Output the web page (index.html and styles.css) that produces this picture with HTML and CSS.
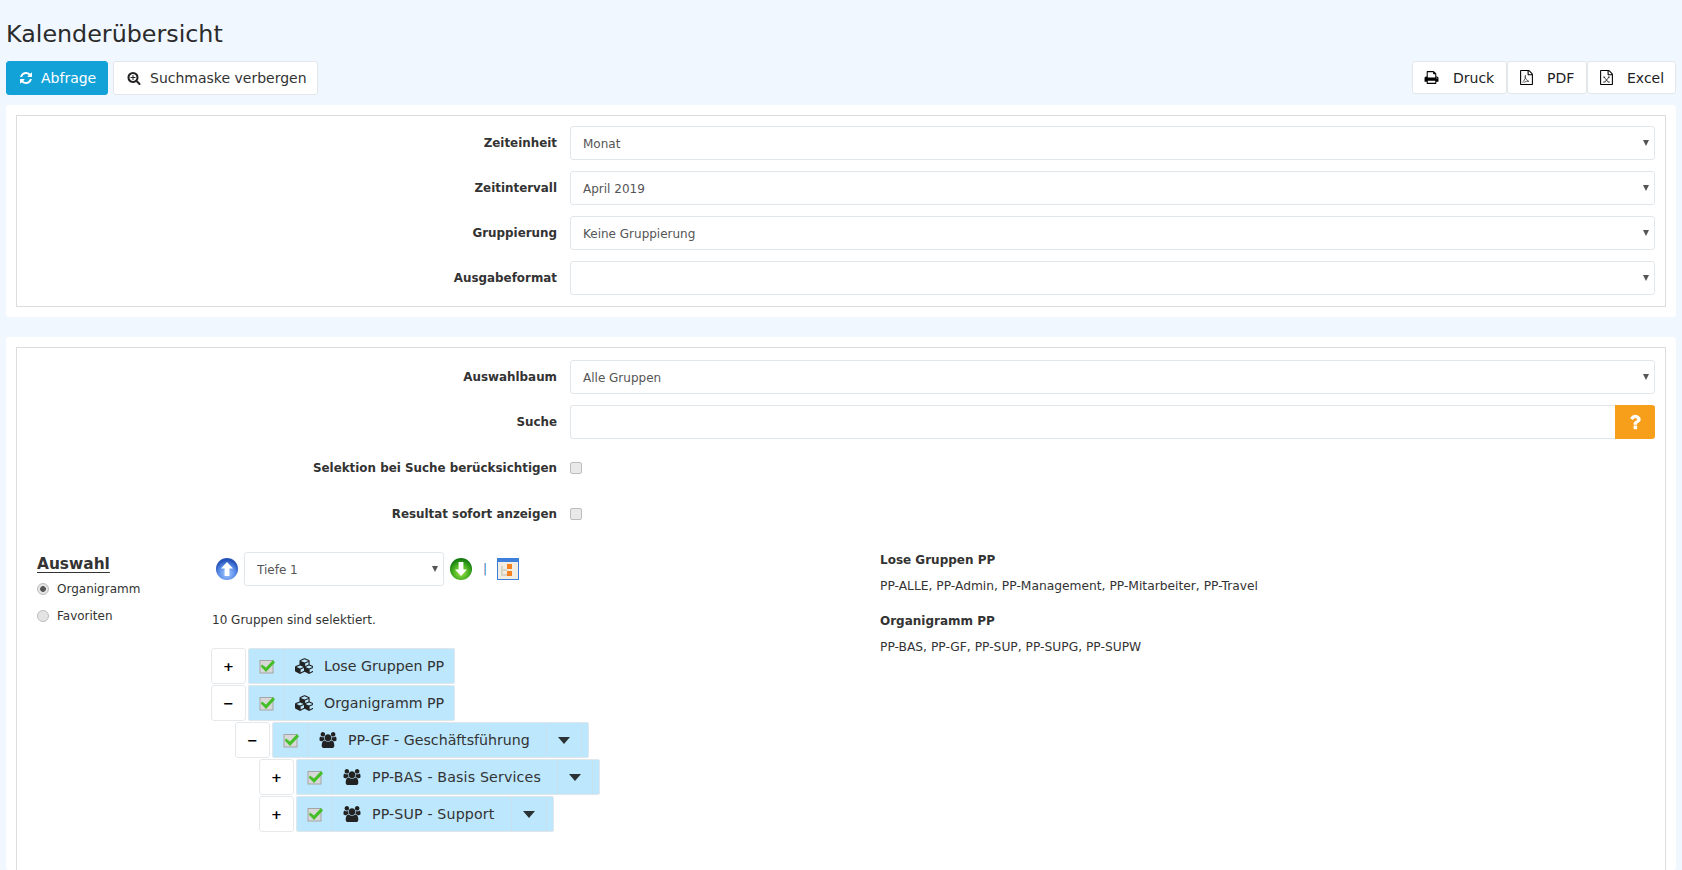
FILE: index.html
```html
<!DOCTYPE html>
<html lang="de">
<head>
    <meta charset="UTF-8">
    <title>Kalenderübersicht</title>
    <link rel="stylesheet" href="styles.css">
</head>
<body>
    <h1 class="page-title">Kalenderübersicht</h1>

    <!-- Toolbar -->
    <div class="toolbar">
        <div class="btn-group">
            <button class="btn btn-primary">
                <svg class="icon" viewBox="0 0 1792 1792"><path d="M1639 1056q0 5-1 7-64 268-268 434.5t-478 166.5q-146 0-282.5-55t-243.5-157l-129 129q-19 19-45 19t-45-19-19-45v-448q0-26 19-45t45-19h448q26 0 45 19t19 45-19 45l-137 137q71 66 161 102t187 36q134 0 250-65t186-179q11-17 53-117 8-23 30-23h192q13 0 22.5 9.5t9.5 22.5zm25-800v448q0 26-19 45t-45 19h-448q-26 0-45-19t-19-45 19-45l138-138q-148-137-349-137-134 0-250 65t-186 179q-11 17-53 117-8 23-30 23h-199q-13 0-22.5-9.5t-9.5-22.5v-7q65-268 270-434.5t480-166.5q146 0 284 55.5t245 156.5l130-129q19-19 45-19t45 19 19 45z"/></svg>
                Abfrage
            </button>
            <button class="btn btn-search">
                <svg class="icon" viewBox="0 0 1792 1792"><path d="M1088 800v64q0 13-9.5 22.5t-22.5 9.5h-224v224q0 13-9.5 22.5t-22.5 9.5h-64q-13 0-22.5-9.5t-9.5-22.5v-224h-224q-13 0-22.5-9.5t-9.5-22.5v-64q0-13 9.5-22.5t22.5-9.5h224v-224q0-13 9.5-22.5t22.5-9.5h64q13 0 22.5 9.5t9.5 22.5v224h224q13 0 22.5 9.5t9.5 22.5zm128 32q0-185-131.5-316.5t-316.5-131.5-316.5 131.5-131.5 316.5 131.5 316.5 316.5 131.5 316.5-131.5 131.5-316.5zm512 832q0 53-37.5 90.5t-90.5 37.5q-54 0-90-38l-343-342q-179 124-399 124-143 0-273.5-55.5t-225-150-150-225-55.5-273.5 55.5-273.5 150-225 225-150 273.5-55.5 273.5 55.5 225 150 150 225 55.5 273.5q0 220-124 399l343 343q37 37 37 90z"/></svg>
                Suchmaske verbergen
            </button>
        </div>
        <div class="btn-group-right">
            <button class="btn btn-export btn-druck">
                <svg class="icon-export" viewBox="0 0 1792 1792"><path d="M448 1536h896v-256h-896v256zm0-640h896v-384h-160q-40 0-68-28t-28-68v-160h-640v640zm1152 64q0-26-19-45t-45-19-45 19-19 45 19 45 45 19 45-19 19-45zm128 0v416q0 13-9.5 22.5t-22.5 9.5h-224v160q0 40-28 68t-68 28h-960q-40 0-68-28t-28-68v-160h-224q-13 0-22.5-9.5t-9.5-22.5v-416q0-79 56.5-135.5t135.5-56.5h64v-544q0-40 28-68t68-28h672q40 0 88 20t76 48l152 152q28 28 48 76t20 88v256h64q79 0 135.5 56.5t56.5 135.5z"/></svg>
                Druck
            </button>
            <button class="btn btn-export btn-pdf">
                <svg class="icon-export" viewBox="0 0 1792 1792"><path d="M1596 380q28 28 48 76t20 88v1152q0 40-28 68t-68 28h-1344q-40 0-68-28t-28-68v-1600q0-40 28-68t68-28h896q40 0 88 20t76 48zm-444-244v376h376q-10-29-22-41l-313-313q-12-12-41-22zm384 1528v-1024h-416q-40 0-68-28t-28-68v-416h-768v1536h1280z"/><path d="M400 1480q180-100 300-420t60-420q-60 60 0 300t420 420q-300-60-620 120" fill="none" stroke="#000" stroke-width="70"/></svg>
                PDF
            </button>
            <button class="btn btn-export btn-excel">
                <svg class="icon-export" viewBox="0 0 1792 1792"><path d="M1596 380q28 28 48 76t20 88v1152q0 40-28 68t-68 28h-1344q-40 0-68-28t-28-68v-1600q0-40 28-68t68-28h896q40 0 88 20t76 48zm-444-244v376h376q-10-29-22-41l-313-313q-12-12-41-22zm384 1528v-1024h-416q-40 0-68-28t-28-68v-416h-768v1536h1280z"/><path d="M590 840l510 600M1200 840l-510 600M500 840h240M1060 840h240M500 1440h240M1060 1440h240" fill="none" stroke="#000" stroke-width="90"/></svg>
                Excel
            </button>
        </div>
    </div>

    <!-- Zeit -->
    <div class="panel panel-time">
        <div class="panel-inner">
            <div class="form-row">
                <label class="form-label">Zeiteinheit</label>
                <div class="select-wrap"><select class="form-select"><option>Monat</option></select></div>
            </div>
            <div class="form-row">
                <label class="form-label">Zeitintervall</label>
                <div class="select-wrap"><select class="form-select"><option>April 2019</option></select></div>
            </div>
            <div class="form-row">
                <label class="form-label">Gruppierung</label>
                <div class="select-wrap"><select class="form-select"><option>Keine Gruppierung</option></select></div>
            </div>
            <div class="form-row">
                <label class="form-label">Ausgabeformat</label>
                <div class="select-wrap"><select class="form-select"><option></option></select></div>
            </div>
        </div>
    </div>

    <!-- Auswahl -->
    <div class="panel panel-tree">
        <div class="panel-inner panel-inner-tree">
            <div class="form-row">
                <label class="form-label">Auswahlbaum</label>
                <div class="select-wrap"><select class="form-select"><option>Alle Gruppen</option></select></div>
            </div>
            <div class="form-row">
                <label class="form-label">Suche</label>
                <div class="search-wrap">
                    <input class="search-input" type="text">
                    <button class="help-btn"><svg class="icon" viewBox="0 0 1792 1792"><path d="M1088 1256v240q0 16-12 28t-28 12h-240q-16 0-28-12t-12-28v-240q0-16 12-28t28-12h240q16 0 28 12t12 28zm316-600q0 54-15.5 101t-35 76.5-55 59.5-57.5 43.5-61 35.5q-41 23-68.5 65t-27.5 67q0 17-12 32.5t-28 15.5h-240q-15 0-25.5-18.5t-10.5-37.5v-45q0-83 65-156.5t143-108.5q59-27 84-56t25-76q0-42-46.5-74t-107.5-32q-65 0-108 29-35 25-107 115-13 16-31 16-12 0-25-8l-164-125q-13-10-15.5-25t5.5-28q160-266 464-266 80 0 161 31t146 83 106 127.5 41 158.5z"/></svg></button>
                </div>
            </div>
            <div class="form-row check-row">
                <label class="form-label">Selektion bei Suche berücksichtigen</label>
                <input class="check" type="checkbox">
            </div>
            <div class="form-row check-row">
                <label class="form-label">Resultat sofort anzeigen</label>
                <input class="check" type="checkbox">
            </div>

            <div class="selection">
                <div class="sel-type">
                    <h3 class="sel-title">Auswahl</h3>
                    <label class="radio-row"><input type="radio" name="auswahl" checked> Organigramm</label>
                    <label class="radio-row"><input type="radio" name="auswahl"> Favoriten</label>
                </div>

                <div class="sel-tree">
                    <div class="depth-row">
                        <svg class="round-icon" viewBox="0 0 24 24">
                            <defs><radialGradient id="blueBall" cx="50%" cy="70%" r="60%"><stop offset="0" stop-color="#a9c9fb"/><stop offset=".6" stop-color="#5d90ec"/><stop offset="1" stop-color="#2552b8"/></radialGradient></defs>
                            <circle cx="12" cy="12" r="11" fill="url(#blueBall)"/>
                            <path d="M12 5l6 6.5h-3.6V19H9.6v-7.5H6z" fill="#fff"/>
                        </svg>
                        <div class="select-wrap depth-select"><select class="form-select"><option>Tiefe 1</option></select></div>
                        <svg class="round-icon round-icon-down" viewBox="0 0 24 24">
                            <defs><radialGradient id="greenBall" cx="50%" cy="65%" r="60%"><stop offset="0" stop-color="#a4e64e"/><stop offset=".6" stop-color="#48b020"/><stop offset="1" stop-color="#127a10"/></radialGradient></defs>
                            <circle cx="12" cy="12" r="11" fill="url(#greenBall)"/>
                            <path d="M12 19l-6-6.5h3.6V5h4.8v7.5H18z" fill="#fff"/>
                        </svg>
                        <span class="depth-sep">|</span>
                        <svg class="org-icon" viewBox="0 0 22 22">
                            <rect width="22" height="22" fill="#3f7fdc"/>
                            <rect x="1" y="4" width="20" height="17" fill="#f1ede2"/>
                            <path d="M5 8v9h5M5 12h5" fill="none" stroke="#d8d4c4" stroke-width="2"/>
                            <rect x="10" y="6" width="5" height="5" fill="#f58220"/>
                            <rect x="10" y="13" width="5" height="5" fill="#f58220"/>
                        </svg>
                    </div>
                    <p class="sel-count">10 Gruppen sind selektiert.</p>

                    <div class="tree">
                        <div class="tree-row">
                            <button class="tree-toggle">+</button>
                            <div class="tree-node">
                                <span class="node-check"><svg class="check-icon" viewBox="0 0 16 16"><rect x="1" y="2.5" width="13" height="12.5" fill="#d8d8d8" stroke="#a5a5a5"/><path d="M3 6.5l4 3 7-7.5 2 2.5L7 14 1.8 8.5z" fill="#45bf28"/></svg></span>
                                <span class="node-label"><svg class="cubes-icon" viewBox="0 0 2048 1792"><path d="M640 1632l384-192v-314l-384 164v342zm-64-454l404-173-404-173-404 173zm1088 454l384-192v-314l-384 164v342zm-64-454l404-173-404-173-404 173zm-448-293l384-165v-266l-384 164v267zm-64-379l441-189-441-189-441 189zm1088 518v416q0 36-19 67t-52 47l-448 224q-25 14-57 14t-57-14l-448-224q-4-2-7-4-2 2-7 4l-448 224q-25 14-57 14t-57-14l-448-224q-33-16-52-47t-19-67v-416q0-38 21.5-70t56.5-48l434-186v-400q0-38 21.5-70t56.5-48l448-192q23-10 50-10t50 10l448 192q35 16 56.5 48t21.5 70v400l434 186q36 16 57 48t21 70z"/></svg>Lose Gruppen PP</span>
                            </div>
                        </div>
                        <div class="tree-row">
                            <button class="tree-toggle">−</button>
                            <div class="tree-node">
                                <span class="node-check"><svg class="check-icon" viewBox="0 0 16 16"><rect x="1" y="2.5" width="13" height="12.5" fill="#d8d8d8" stroke="#a5a5a5"/><path d="M3 6.5l4 3 7-7.5 2 2.5L7 14 1.8 8.5z" fill="#45bf28"/></svg></span>
                                <span class="node-label"><svg class="cubes-icon" viewBox="0 0 2048 1792"><path d="M640 1632l384-192v-314l-384 164v342zm-64-454l404-173-404-173-404 173zm1088 454l384-192v-314l-384 164v342zm-64-454l404-173-404-173-404 173zm-448-293l384-165v-266l-384 164v267zm-64-379l441-189-441-189-441 189zm1088 518v416q0 36-19 67t-52 47l-448 224q-25 14-57 14t-57-14l-448-224q-4-2-7-4-2 2-7 4l-448 224q-25 14-57 14t-57-14l-448-224q-33-16-52-47t-19-67v-416q0-38 21.5-70t56.5-48l434-186v-400q0-38 21.5-70t56.5-48l448-192q23-10 50-10t50 10l448 192q35 16 56.5 48t21.5 70v400l434 186q36 16 57 48t21 70z"/></svg>Organigramm PP</span>
                            </div>
                        </div>
                        <div class="tree-row level-1">
                            <button class="tree-toggle">−</button>
                            <div class="tree-node">
                                <span class="node-check"><svg class="check-icon" viewBox="0 0 16 16"><rect x="1" y="2.5" width="13" height="12.5" fill="#d8d8d8" stroke="#a5a5a5"/><path d="M3 6.5l4 3 7-7.5 2 2.5L7 14 1.8 8.5z" fill="#45bf28"/></svg></span>
                                <span class="node-label"><svg class="users-icon" viewBox="0 0 1920 1792"><path d="M593 896q-162 5-265 128h-134q-82 0-138-40.5t-56-118.5q0-353 124-353 6 0 43.5 21t97.5 42.5 119 21.5q67 0 133-23-5 37-5 66 0 139 81 256zm1071 637q0 120-73 189.5t-194 69.5h-874q-121 0-194-69.5t-73-189.5q0-53 3.5-103.5t14-109 26.5-108.5 43-97.5 62-81 85.5-53.5 111.5-20q10 0 43 21.5t73 48 107 48 135 21.5 135-21.5 107-48 73-48 43-21.5q61 0 111.5 20t85.5 53.5 62 81 43 97.5 26.5 108.5 14 109 3.5 103.5zm-1024-1277q0 106-75 181t-181 75-181-75-75-181 75-181 181-75 181 75 75 181zm704 384q0 159-112.5 271.5t-271.5 112.5-271.5-112.5-112.5-271.5 112.5-271.5 271.5-112.5 271.5 112.5 112.5 271.5zm576 225q0 78-56 118.5t-138 40.5h-134q-103-123-265-128 81-117 81-256 0-29-5-66 66 23 133 23 59 0 119-21.5t97.5-42.5 43.5-21q124 0 124 353zm-128-609q0 106-75 181t-181 75-181-75-75-181 75-181 181-75 181 75 75 181z"/></svg>PP-GF - Geschäftsführung</span>
                                <span class="node-menu"><span class="caret"></span></span>
                            </div>
                        </div>
                        <div class="tree-row level-2">
                            <button class="tree-toggle">+</button>
                            <div class="tree-node">
                                <span class="node-check"><svg class="check-icon" viewBox="0 0 16 16"><rect x="1" y="2.5" width="13" height="12.5" fill="#d8d8d8" stroke="#a5a5a5"/><path d="M3 6.5l4 3 7-7.5 2 2.5L7 14 1.8 8.5z" fill="#45bf28"/></svg></span>
                                <span class="node-label"><svg class="users-icon" viewBox="0 0 1920 1792"><path d="M593 896q-162 5-265 128h-134q-82 0-138-40.5t-56-118.5q0-353 124-353 6 0 43.5 21t97.5 42.5 119 21.5q67 0 133-23-5 37-5 66 0 139 81 256zm1071 637q0 120-73 189.5t-194 69.5h-874q-121 0-194-69.5t-73-189.5q0-53 3.5-103.5t14-109 26.5-108.5 43-97.5 62-81 85.5-53.5 111.5-20q10 0 43 21.5t73 48 107 48 135 21.5 135-21.5 107-48 73-48 43-21.5q61 0 111.5 20t85.5 53.5 62 81 43 97.5 26.5 108.5 14 109 3.5 103.5zm-1024-1277q0 106-75 181t-181 75-181-75-75-181 75-181 181-75 181 75 75 181zm704 384q0 159-112.5 271.5t-271.5 112.5-271.5-112.5-112.5-271.5 112.5-271.5 271.5-112.5 271.5 112.5 112.5 271.5zm576 225q0 78-56 118.5t-138 40.5h-134q-103-123-265-128 81-117 81-256 0-29-5-66 66 23 133 23 59 0 119-21.5t97.5-42.5 43.5-21q124 0 124 353zm-128-609q0 106-75 181t-181 75-181-75-75-181 75-181 181-75 181 75 75 181z"/></svg>PP-BAS - Basis Services</span>
                                <span class="node-menu"><span class="caret"></span></span>
                            </div>
                        </div>
                        <div class="tree-row level-2">
                            <button class="tree-toggle">+</button>
                            <div class="tree-node">
                                <span class="node-check"><svg class="check-icon" viewBox="0 0 16 16"><rect x="1" y="2.5" width="13" height="12.5" fill="#d8d8d8" stroke="#a5a5a5"/><path d="M3 6.5l4 3 7-7.5 2 2.5L7 14 1.8 8.5z" fill="#45bf28"/></svg></span>
                                <span class="node-label"><svg class="users-icon" viewBox="0 0 1920 1792"><path d="M593 896q-162 5-265 128h-134q-82 0-138-40.5t-56-118.5q0-353 124-353 6 0 43.5 21t97.5 42.5 119 21.5q67 0 133-23-5 37-5 66 0 139 81 256zm1071 637q0 120-73 189.5t-194 69.5h-874q-121 0-194-69.5t-73-189.5q0-53 3.5-103.5t14-109 26.5-108.5 43-97.5 62-81 85.5-53.5 111.5-20q10 0 43 21.5t73 48 107 48 135 21.5 135-21.5 107-48 73-48 43-21.5q61 0 111.5 20t85.5 53.5 62 81 43 97.5 26.5 108.5 14 109 3.5 103.5zm-1024-1277q0 106-75 181t-181 75-181-75-75-181 75-181 181-75 181 75 75 181zm704 384q0 159-112.5 271.5t-271.5 112.5-271.5-112.5-112.5-271.5 112.5-271.5 271.5-112.5 271.5 112.5 112.5 271.5zm576 225q0 78-56 118.5t-138 40.5h-134q-103-123-265-128 81-117 81-256 0-29-5-66 66 23 133 23 59 0 119-21.5t97.5-42.5 43.5-21q124 0 124 353zm-128-609q0 106-75 181t-181 75-181-75-75-181 75-181 181-75 181 75 75 181z"/></svg>PP-SUP - Support</span>
                                <span class="node-menu"><span class="caret"></span></span>
                            </div>
                        </div>
                    </div>
                </div>

                <div class="sel-summary">
                    <h4 class="summary-title">Lose Gruppen PP</h4>
                    <p class="summary-text">PP-ALLE, PP-Admin, PP-Management, PP-Mitarbeiter, PP-Travel</p>
                    <h4 class="summary-title">Organigramm PP</h4>
                    <p class="summary-text">PP-BAS, PP-GF, PP-SUP, PP-SUPG, PP-SUPW</p>
                </div>
            </div>
        </div>
    </div>
</body>
</html>
```

FILE: styles.css
```css
html, body {
    height: 870px;
    overflow: hidden;
}
body {
    margin: 0;
    padding: 0 6px;
    background: #f0f7ff;
    color: #333;
    font-family: "DejaVu Sans", sans-serif;
    font-size: 12px;
}
.page-title {
    margin: 0;
    padding-top: 18px;
    height: 43px;
    font-size: 23.8px;
    line-height: 32px;
    font-weight: normal;
    color: #2b2b2b;
}

/* Toolbar */
.toolbar {
    display: flex;
    justify-content: space-between;
    height: 34px;
    margin-bottom: 10px;
}
.btn-group {
    display: flex;
    gap: 5px;
}
.btn-group-right {
    display: flex;
}
.btn {
    display: flex;
    align-items: center;
    border: 1px solid #e2e7ec;
    border-radius: 3px;
    background: #fff;
    color: #333;
    font-family: inherit;
    font-size: 14px;
    padding: 0;
}
.btn-primary {
    width: 102px;
    padding-left: 12px;
    gap: 8px;
    background: #12a2d8;
    border-color: #12a2d8;
    color: #fff;
}
.btn-search {
    width: 205px;
    padding-left: 13px;
    gap: 9px;
}
.icon {
    width: 14px;
    height: 14px;
    fill: currentColor;
}
.btn-search .icon {
    fill: #222;
}
.btn-export {
    color: #222;
    height: 33px;
    padding-left: 11px;
    gap: 13px;
}
.btn-druck {
    width: 95px;
    gap: 14px;
}
.btn-pdf {
    width: 80px;
}
.btn-excel {
    width: 89px;
}
.icon-export {
    width: 15px;
    height: 15px;
    fill: #000;
}

/* Panels */
.panel {
    background: #fff;
    border-radius: 3px;
    padding: 10px;
}
.panel-time {
    height: 212px;
    box-sizing: border-box;
    margin-bottom: 20px;
}
.panel-tree {
    padding-bottom: 0;
}
.panel-inner {
    border: 1px solid #dcdcdc;
    padding: 10px;
    box-sizing: border-box;
    height: 192px;
}
.panel-inner-tree {
    height: 523px;
    padding-top: 12px;
    border-bottom: 0;
}
.form-row {
    display: flex;
    align-items: center;
    height: 34px;
    margin-bottom: 11px;
    gap: 13px;
}
.form-label {
    width: 530px;
    text-align: right;
    font-weight: bold;
    font-size: 11.9px;
    color: #333;
}
.select-wrap {
    position: relative;
    flex: 1;
}
.select-wrap::after {
    content: "";
    position: absolute;
    top: 14px;
    right: 6px;
    border-left: 3px solid transparent;
    border-right: 3px solid transparent;
    border-top: 6px solid #555;
}
.form-select {
    display: block;
    width: 100%;
    height: 34px;
    appearance: none;
    border: 1px solid #e2e7ec;
    border-radius: 3px;
    background: #fff;
    padding: 2px 12px 0;
    color: #555;
    font-family: inherit;
    font-size: 12px;
}
.search-wrap {
    display: flex;
    flex: 1;
}
.search-input {
    flex: 1;
    height: 34px;
    box-sizing: border-box;
    border: 1px solid #e2e7ec;
    border-right: 0;
    border-radius: 3px 0 0 3px;
    padding: 0 12px;
}
.help-btn {
    width: 40px;
    height: 34px;
    border: 0;
    border-radius: 0 3px 3px 0;
    background: #f79e1b;
    color: #fff;
    padding: 0;
    display: flex;
    align-items: center;
    justify-content: center;
}
.help-btn .icon {
    width: 20px;
    height: 20px;
}
.check-row {
    height: 35px;
    margin-bottom: 11px;
}
.check {
    appearance: none;
    width: 12px;
    height: 12px;
    margin: 0;
    border: 1px solid #bdbdbd;
    border-radius: 2px;
    background: #e9e9e9;
}

/* Selection area */
.selection {
    display: flex;
    margin-top: 21px;
}
.sel-type {
    width: 180px;
    padding: 3px 0 0 10px;
    box-sizing: border-box;
}
.sel-title {
    margin: 0 0 2px;
    font-size: 15.4px;
    line-height: 18px;
    text-decoration: underline;
    text-underline-offset: 3px;
    color: #333;
}
.radio-row {
    display: flex;
    align-items: center;
    gap: 8px;
    height: 27px;
    font-size: 12px;
}
.radio-row input {
    appearance: none;
    margin: 0;
    width: 12px;
    height: 12px;
    border: 1px solid #bdbdbd;
    border-radius: 50%;
    background: #e4e4e4;
}
.radio-row input:checked {
    background: radial-gradient(circle, #555 0, #555 2.5px, #e4e4e4 3.2px);
}
.sel-tree {
    width: 673px;
}
.depth-row {
    display: flex;
    align-items: center;
    height: 34px;
}
.round-icon {
    width: 24px;
    height: 24px;
    margin-left: 8px;
}
.round-icon-down {
    margin-left: 0;
}
.depth-select {
    flex: 0 0 200px;
    margin: 0 5px;
}
.depth-sep {
    margin: 0 10px;
    color: #337ab7;
}
.org-icon {
    width: 22px;
    height: 22px;
}
.sel-count {
    margin: 26px 0 0;
    line-height: 16px;
    padding-left: 5px;
}
.tree {
    margin: 20px 0 0 4px;
}
.tree-row {
    display: flex;
    height: 36px;
    margin-bottom: 1px;
    gap: 2px;
}
.level-1 {
    margin-left: 24px;
}
.level-2 {
    margin-left: 48px;
}
.tree-toggle {
    width: 35px;
    height: 36px;
    border: 1px solid #e6e9ec;
    border-radius: 3px;
    background: #fff;
    color: #000;
    font-family: inherit;
    font-size: 13px;
    font-weight: bold;
    padding: 0;
}
.tree-node {
    display: flex;
    align-items: stretch;
    background: #bde7fd;
    border: 1px solid #dfe7ec;
    border-radius: 2px;
    padding-right: 5px;
    font-size: 14.2px;
}
.level-2 .node-label {
    letter-spacing: 0.15px;
}
.node-check {
    width: 35px;
    display: flex;
    align-items: center;
    justify-content: center;
    border-right: 1px solid #c6e0ee;
}
.check-icon {
    width: 16px;
    height: 16px;
}
.node-label {
    display: flex;
    align-items: center;
    padding: 0 5px 0 10px;
    white-space: nowrap;
}
.cubes-icon, .users-icon {
    width: 18px;
    height: 16px;
    margin-right: 11px;
    fill: #222;
}
.node-menu {
    box-sizing: border-box;
    width: 36px;
    display: flex;
    align-items: center;
    justify-content: center;
    border-left: 1px solid #c6e0ee;
    border-right: 1px solid #c6e0ee;
    margin-left: 11px;
    margin-right: 1px;
}
.caret {
    border-left: 6px solid transparent;
    border-right: 6px solid transparent;
    border-top: 7px solid #2a3236;
}

/* Summary on the right */
.summary-title {
    margin: 0;
    font-size: 12px;
    line-height: 16px;
    color: #333;
}
.summary-text {
    margin: 10px 0 19px;
    font-size: 12.28px;
    line-height: 16px;
}
```
